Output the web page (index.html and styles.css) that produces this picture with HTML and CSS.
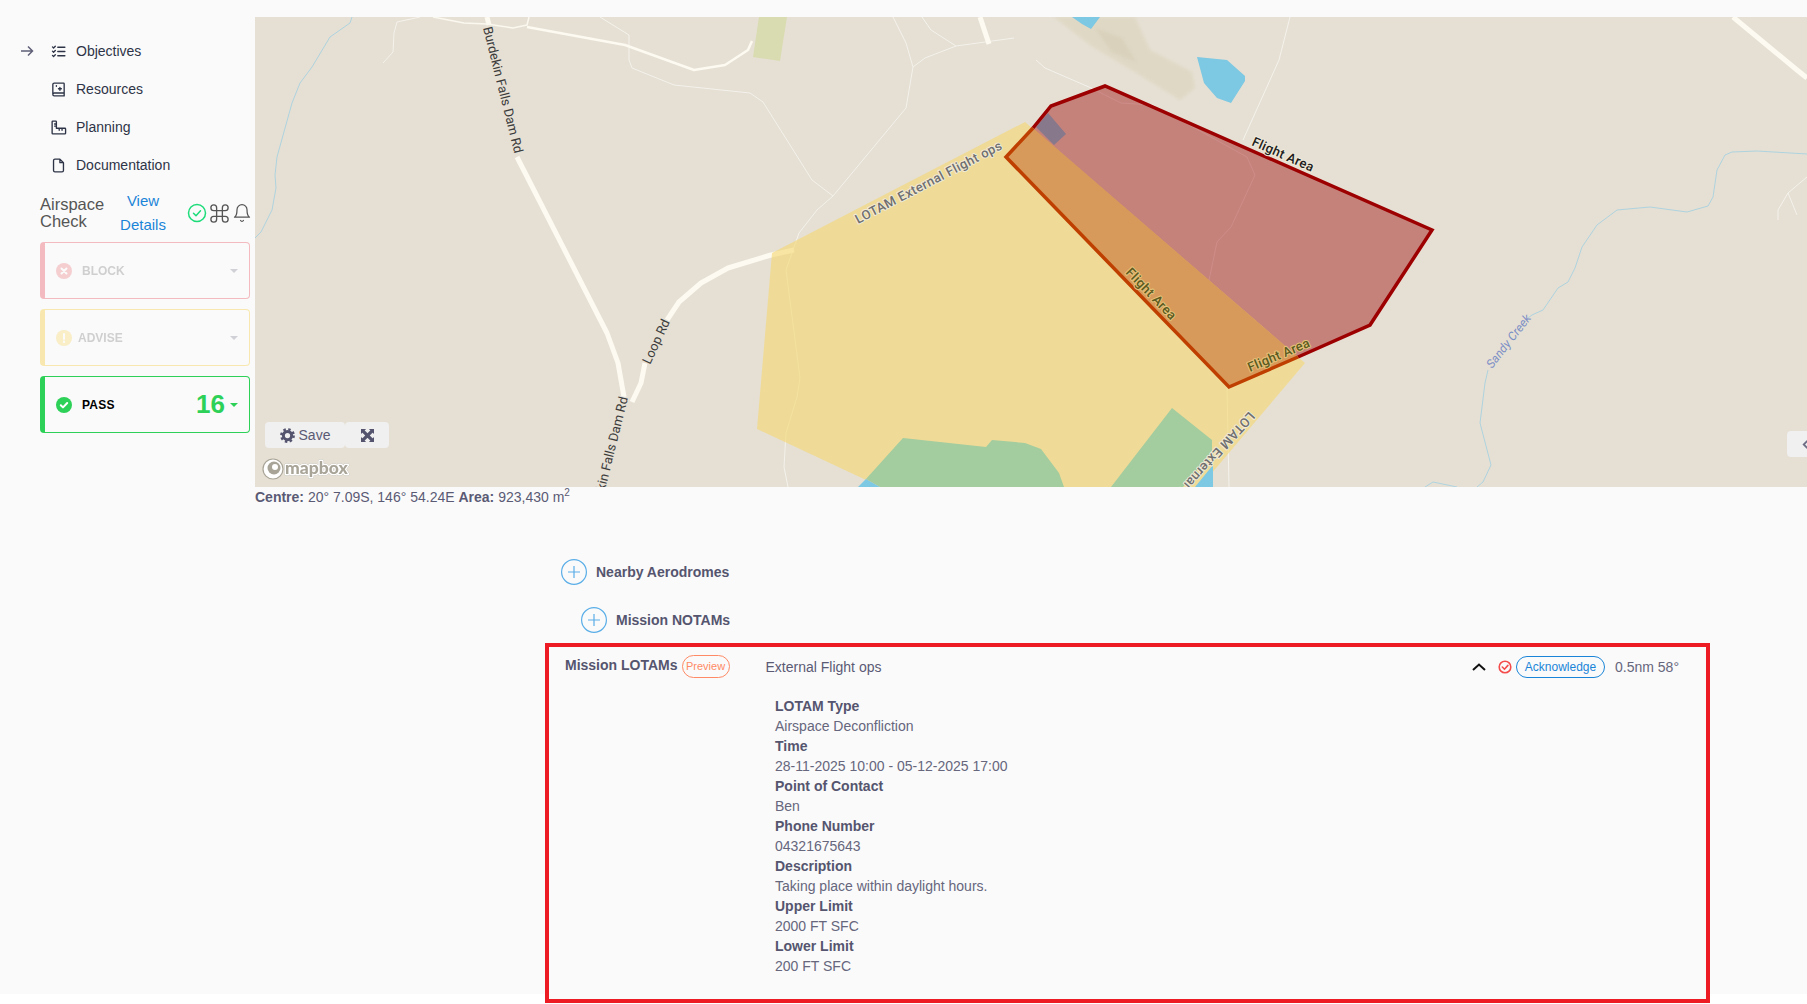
FILE: index.html
```html
<!DOCTYPE html>
<html lang="en">
<head>
<meta charset="utf-8">
<title>Airspace Check</title>
<link rel="stylesheet" href="styles.css">
</head>
<body>
<div class="page">
  <div class="top">
    <aside class="sidebar">
      <nav class="nav">
        <a class="nav-item">
          <span class="nav-arrow"><svg class="i-arrow" viewBox="0 0 14 12"><path d="M1 6h11.5M8 1.5 12.5 6 8 10.5"/></svg></span>
          <svg class="nav-icon" viewBox="0 0 24 24"><path d="M3.5 5.5 5 7l2.5-2.5M3.5 11.5 5 13l2.5-2.5M3.5 17.5 5 19l2.5-2.5M11 6h10M11 12h10M11 18h10"/></svg>
          <span>Objectives</span>
        </a>
        <a class="nav-item">
          <span class="nav-arrow"></span>
          <svg class="nav-icon" viewBox="0 0 24 24"><path d="M4 18V5a2 2 0 0 1 2-2h13a1 1 0 0 1 1 1v13H6a2 2 0 0 0-2 2 2 2 0 0 0 2 2h14v-4M14 9v4M12 11h4M9 6.5v1"/></svg>
          <span>Resources</span>
        </a>
        <a class="nav-item">
          <span class="nav-arrow"></span>
          <svg class="nav-icon" viewBox="0 0 24 24"><path d="M3 4a1 1 0 0 1 1-1h4a1 1 0 0 1 1 1v9h12a1 1 0 0 1 1 1v6a1 1 0 0 1-1 1H4a1 1 0 0 1-1-1zM13 13v3M17 13v3M9 7H6.5M9 10H6.5"/></svg>
          <span>Planning</span>
        </a>
        <a class="nav-item">
          <span class="nav-arrow"></span>
          <svg class="nav-icon" viewBox="0 0 24 24"><path d="M14 3H7a2 2 0 0 0-2 2v14a2 2 0 0 0 2 2h10a2 2 0 0 0 2-2V8zM14 3v5h5"/></svg>
          <span>Documentation</span>
        </a>
      </nav>
      <div class="check-head">
        <div class="check-title">Airspace Check</div>
        <a class="check-link">View Details</a>
        <div class="check-icons">
          <svg class="ci ci-ok" viewBox="0 0 20 20"><circle cx="10" cy="10" r="8.5"/><path d="m6.5 10.2 2.5 2.5 4.5-5"/></svg>
          <svg class="ci ci-drone" viewBox="0 0 24 24"><path d="M15 6v12a3 3 0 1 0 3-3H6a3 3 0 1 0 3 3V6a3 3 0 1 0-3 3h12a3 3 0 1 0-3-3"/></svg>
          <svg class="ci ci-dark" viewBox="0 0 24 24"><path d="M6 8a6 6 0 0 1 12 0c0 7 3 9 3 9H3s3-2 3-9M10.3 21a1.94 1.94 0 0 0 3.4 0"/></svg>
        </div>
      </div>
      <div class="cards">
        <div class="card card-block">
          <svg class="card-icon" viewBox="0 0 16 16"><circle class="disc" cx="8" cy="8" r="8"/><path class="mark" d="m5.5 5.5 5 5m0-5-5 5"/></svg>
          <span class="card-label">BLOCK</span>
          <span class="card-right"><span class="caret"></span></span>
        </div>
        <div class="card card-advise">
          <svg class="card-icon" viewBox="0 0 16 16"><circle class="disc" cx="8" cy="8" r="8"/><path class="mark" d="M8 4v5M8 11.5v.5"/></svg>
          <span class="card-label">ADVISE</span>
          <span class="card-right"><span class="caret"></span></span>
        </div>
        <div class="card card-pass">
          <svg class="card-icon" viewBox="0 0 16 16"><circle class="disc" cx="8" cy="8" r="8"/><path class="mark" d="m4.8 8.2 2.2 2.2 4.2-4.4"/></svg>
          <span class="card-label">PASS</span>
          <span class="card-right"><span class="count">16</span><span class="caret"></span></span>
        </div>
      </div>
    </aside>
    <main class="map-col">
      <div class="map">
        <svg class="map-svg" viewBox="255 17 1552 470" preserveAspectRatio="none">
          <g class="terrain">
            <path d="M1054 17 1090 45 1135 72 1180 100 1195 88 1192 72 1150 50 1135 17z"/>
            <path class="terrain-dark" d="M1095 28 1122 38 1136 62 1112 52z"/>
          </g>
          <path class="field" d="M759 17h28l-7 44-27-4z"/>
          <path class="water" d="M1072 17h28l-9 12-9-5zM1197 57l30 3 18 16v5l-14 22-14-5-13-15z"/>
          <g class="stream">
            <path d="M352 17 350 23 330 37 312 67 300 83 292 103 277 157 275 175 276 188 272 210 261 232 255 238"/>
            <path d="M1807 154 1757 151 1732 152 1725 155 1717 170 1713 197 1708 206 1687 212 1650 207 1617 210 1597 225 1582 247 1575 268 1568 282 1558 288 1543 310 1532 315 1528 318"/>
            <path d="M1488 370 1485 383 1480 423 1491 465 1483 482 1477 487M1425 487 1433 482 1457 487"/>
          </g>
          <g class="track">
            <path d="M420 17 397 22 394 33 393 52 383 63"/>
            <path d="M600 17 629 35 629 60 632 68 674 85 750 93 763 102 812 180 833 196"/>
            <path d="M893 17 906 43 913 67 906 108 833 196 817 210 799 233 786 270 800 378 797 397 786 433 784 467 788 487"/>
            <path d="M913 67 925 58 956 46 1014 38"/>
            <path d="M922 17 931 30 956 46"/>
            <path d="M1036 60 1045 68 1089 87 1121 103 1153 105 1247 157 1255 175 1231 227 1217 242 1207 290 1227 387 1229 487"/>
            <path d="M1290 17 1279 60 1243 140"/>
            <path d="M1807 177 1788 193 1778 210V220M1788 193 1797 215"/>
          </g>
          <g class="road">
            <path d="M487 17 489 25"/>
            <path d="M517 157 607 333 618 363 624 397"/>
            <path d="M632 402 641 383 645 363"/>
            <path d="M667 320 679 302 701 283 728 268 771 255 794 250"/>
            <path d="M980 17 989 44"/>
            <path d="M1733 17 1797 70 1807 78"/>
          </g>
          <path class="road-thin" d="M433 17 464 23 487 24 513 28 527 25 529 17"/>
          <path class="road-mid" d="M527 27 625 45 694 70 725 65 748 50 752 41"/>
          <path class="flight-fill" d="M1105 86 1051 106 1006 157 1229 387 1370 325 1432 230z"/>
          <path class="lotam-fill" d="M1025 122 772 253 757 429 881 487H1200L1305 363z"/>
          <path class="green" d="M903 438 986 447 992 440 1025 443 1041 449 1059 473 1064 487H880L866 479z"/>
          <path class="green" d="M1172 408 1212 440V452L1183 487H1111z"/>
          <path class="water" d="M858 487 866 479 880 487zM1213 487V465L1195 487z"/>
          <path class="overlap" d="M1033 128 1298 357 1229 387 1006 157z"/>
          <path class="hidden-quad" d="M1048 113 1066 134 1054 145 1036 127z"/>
          <path class="flight-line" d="M1033 128 1051 106 1105 86 1432 230 1370 325 1298 357"/>
          <path class="flight-line-over" d="M1033 128 1006 157 1229 387 1298 357"/>

          <text class="lbl lbl-road" transform="translate(483 28) rotate(76)">Burdekin Falls Dam Rd</text>
          <text class="lbl lbl-road lbl-end" transform="translate(628 398) rotate(-76)">Burdekin Falls Dam Rd</text>
          <text class="lbl lbl-road" transform="translate(650 365) rotate(-65)">Loop Rd</text>
          <text class="lbl lbl-lotam" transform="translate(858 224) rotate(-27.5)">LOTAM External Flight ops</text>
          <text class="lbl lbl-lotam" transform="translate(1249 411) rotate(132)">LOTAM External Flight ops</text>
          <text class="lbl lbl-flight" transform="translate(1251 145) rotate(24)">Flight Area</text>
          <text class="lbl lbl-flight-o" transform="translate(1125 273) rotate(46)">Flight Area</text>
          <text class="lbl lbl-flight-o" transform="translate(1250 372) rotate(-23)">Flight Area</text>
          <text class="lbl lbl-creek" transform="translate(1492 369) rotate(-52)">Sandy Creek</text>

          <circle class="logo-ring" cx="273" cy="469" r="10"/>
          <circle class="logo-core" cx="274" cy="468" r="6.5"/>
          <circle class="logo-dot" cx="275" cy="467" r="3"/>
          <text class="logo-text" x="285" y="474">mapbox</text>
        </svg>
        <div class="map-tools">
          <button class="map-btn map-save">
            <svg class="gear" viewBox="0 0 16 16"><circle class="gear-ring" cx="8" cy="8" r="4.4"/><circle class="gear-teeth" cx="8" cy="8" r="6.6"/></svg>
            Save
          </button>
          <button class="map-btn map-expand">
            <svg class="expand" viewBox="0 0 14 14"><path d="M0 0h5.5L0 5.5zM14 0v5.5L8.5 0zM0 14V8.5L5.5 14zM14 14H8.5L14 8.5z"/><path class="expand-x" d="m2 2 10 10M12 2 2 12"/></svg>
          </button>
        </div>
        <div class="map-edge"><svg class="edge-chev" viewBox="0 0 10 12"><path d="M7 2 3 6l4 4"/></svg></div>
      </div>
      <p class="caption"><b>Centre:</b> 20° 7.09S, 146° 54.24E <b>Area:</b> 923,430 m<sup>2</sup></p>
    </main>
  </div>

  <section class="sections">
    <div class="acc acc-nearby">
      <svg class="plus" viewBox="0 0 26 26"><circle cx="13" cy="13" r="12.4"/><path d="M13 7v12M7 13h12"/></svg>
      <span class="acc-label">Nearby Aerodromes</span>
    </div>
    <div class="acc acc-notam">
      <svg class="plus" viewBox="0 0 26 26"><circle cx="13" cy="13" r="12.4"/><path d="M13 7v12M7 13h12"/></svg>
      <span class="acc-label">Mission NOTAMs</span>
    </div>
    <div class="lotam">
      <div class="lotam-head">
        <span class="acc-label lotam-title">Mission LOTAMs</span>
        <span class="preview">Preview</span>
        <span class="lotam-name">External Flight ops</span>
        <svg class="chev" viewBox="0 0 14 8"><path d="m1 7 6-5.5L13 7"/></svg>
        <svg class="red-check" viewBox="0 0 14 14"><circle cx="7" cy="7" r="5.8"/><path d="m4.3 7 2.2 2.2 3.4-3.8"/></svg>
        <span class="ack">Acknowledge</span>
        <span class="dist">0.5nm 58°</span>
      </div>
      <dl class="details">
        <dt>LOTAM Type</dt><dd>Airspace Deconfliction</dd>
        <dt>Time</dt><dd>28-11-2025 10:00 - 05-12-2025 17:00</dd>
        <dt>Point of Contact</dt><dd>Ben</dd>
        <dt>Phone Number</dt><dd>04321675643</dd>
        <dt>Description</dt><dd>Taking place within daylight hours.</dd>
        <dt>Upper Limit</dt><dd>2000 FT SFC</dd>
        <dt>Lower Limit</dt><dd>200 FT SFC</dd>
      </dl>
    </div>
  </section>
</div>
</body>
</html>
```

FILE: styles.css
```css
* { box-sizing: border-box; }
html, body { margin: 0; padding: 0; background: #fff; overflow: hidden; height: 1004px; }
body { font-family: "Liberation Sans", Arial, sans-serif; font-size: 14px; color: #5a5a75; }
.page { height: 994px; background: #fafafa; padding-top: 17px; }
.top { display: flex; align-items: flex-start; }

/* sidebar */
.sidebar { width: 255px; flex: none; }
.nav { padding-top: 15px; }
.nav-item { display: flex; align-items: center; height: 38px; padding-left: 20px; color: #2e3447; }
.nav-arrow { width: 30px; flex: none; display: flex; }
.i-arrow { width: 14px; height: 12px; fill: none; stroke: #5f5f78; stroke-width: 1.5; }
.nav-icon { width: 17px; height: 17px; flex: none; margin-right: 9px; fill: none; stroke: #2e3447; stroke-width: 1.9; stroke-linecap: round; stroke-linejoin: round; }

.check-head { display: flex; align-items: center; height: 48px; margin-top: 5px; padding-left: 40px; }
.check-title { width: 80px; font-size: 16.5px; line-height: 17px; color: #555; }
.check-link { width: 46px; text-align: center; font-size: 15px; line-height: 24px; color: #1a85d8; }
.check-icons { display: flex; align-items: center; margin-left: 21px; }
.ci { width: 20px; height: 20px; flex: none; fill: none; stroke-linecap: round; stroke-linejoin: round; }
.ci-ok { stroke: #1edc7a; stroke-width: 1.5; }
.ci-dark { margin-left: 1px; stroke: #555; stroke-width: 1.5; }
.ci-drone { width: 23px; height: 23px; margin-left: 1px; stroke: #555; stroke-width: 1.4; }

.cards { display: flex; flex-direction: column; gap: 10px; margin: 5px 0 0 40px; width: 210px; }
.card { display: flex; align-items: center; height: 57px; padding: 0 11px; background: #fafafa; border: 1px solid; border-left-width: 5px; border-radius: 4px; }
.card-icon { width: 16px; height: 16px; margin-right: 10px; flex: none; }
.card-label { font-size: 12px; font-weight: 700; color: #777; }
.card-right { margin-left: auto; display: flex; align-items: center; gap: 5px; }
.caret { width: 0; height: 0; border-left: 4px solid transparent; border-right: 4px solid transparent; border-top: 4px solid #7a7a90; }
.disc { fill: currentColor; }
.mark { fill: none; stroke: #fff; stroke-width: 2; stroke-linecap: round; stroke-linejoin: round; }
.card-block { border-color: #e53945; color: #e53945; opacity: .32; }
.card-advise { border-color: #f5c518; color: #f5c518; opacity: .32; }
.card-block .disc, .card-advise .disc { opacity: .7; }
.card-advise .card-icon { margin-right: 6px; }
.card-pass { border-color: #2ed158; color: #2ed158; }
.card-pass .card-label { color: #000; letter-spacing: .2px; }
.card-pass .caret { border-top-color: #2ed158; }
.count { font-size: 26px; font-weight: 700; color: #2ed158; line-height: 1; position: relative; top: -1px; }

/* map */
.map-col { flex: 1; min-width: 0; }
.map { position: relative; height: 470px; background: #e6e0d4; overflow: hidden; }
.map-svg { display: block; width: 100%; height: 100%; }
.terrain path { fill: #dfd8c5; filter: blur(1.5px); }
.terrain .terrain-dark { fill: #d9d1bb; }
.field { fill: #d9dbb0; }
.water { fill: #7dc8e2; }
.stream path { fill: none; stroke: #aed3df; stroke-width: 1; }
.track path { fill: none; stroke: #f4f2ec; stroke-width: 1; }
.road path { fill: none; stroke: #fdfaf2; stroke-width: 5; stroke-linejoin: round; }
.road-mid { fill: none; stroke: #fdfaf2; stroke-width: 2.5; stroke-linejoin: round; }
.road-thin { fill: none; stroke: #fbf8f0; stroke-width: 1.5; stroke-linejoin: round; }
.flight-fill { fill: rgba(152, 0, 0, .42); }
.hidden-quad { fill: #87788b; }
.lotam-fill { fill: rgba(245, 215, 110, .6); }
.green { fill: #a3cc9f; }
.overlap { fill: #d89a5a; }
.flight-line { fill: none; stroke: #9d0000; stroke-width: 3.5; stroke-linejoin: miter; }
.flight-line-over { fill: none; stroke: #bf3f00; stroke-width: 3.5; stroke-linejoin: miter; }

.lbl { font-family: Roboto, "Liberation Sans", sans-serif; font-size: 13px; paint-order: stroke; stroke-linejoin: round; }
.lbl-end { text-anchor: end; }
.lbl-road { fill: #3b3b3b; stroke: #e6e0d4; stroke-width: 2; }
.lbl-lotam { font-weight: 500; letter-spacing: .4px; fill: #6f6f6f; stroke: #f0ead8; stroke-width: 2; }
.lbl-flight { font-weight: 500; letter-spacing: .3px; fill: #1d1d1d; stroke: #f0ead8; stroke-width: 2; }
.lbl-flight-o { font-weight: 500; letter-spacing: .3px; fill: #5b5a20; stroke: #e6c27a; stroke-width: 2; }
.lbl-creek { font-size: 12px; font-style: italic; fill: #7b8ec6; stroke: #e6e0d4; stroke-width: 1; }

.logo-ring { fill: #fff; stroke: #a9a498; stroke-width: 1.2; }
.logo-core { fill: #a9a498; }
.logo-dot { fill: #fff; }
.logo-text { font-family: Lato, "Liberation Sans", sans-serif; font-size: 17.5px; font-weight: 900; fill: #a9a498; stroke: #fff; stroke-width: 3; paint-order: stroke; stroke-linejoin: round; filter: drop-shadow(0 0 .6px #8a8578); }

.map-tools { position: absolute; left: 10px; bottom: 39px; display: flex; }
.map-btn { display: flex; align-items: center; justify-content: center; height: 26px; border: 0; border-radius: 4px; padding: 0; background: #f0f0f0; color: #5a5a75; font: 14px "Liberation Sans", Arial, sans-serif; }
.map-save { width: 80px; gap: 4px; }
.map-expand { width: 44px; }
.gear { width: 15px; height: 15px; }
.gear-ring { fill: none; stroke: #54546f; stroke-width: 3.2; }
.gear-teeth { fill: none; stroke: #54546f; stroke-width: 2.6; stroke-dasharray: 2.6 2.58; }
.expand { width: 13px; height: 13px; fill: #54546f; }
.expand-x { stroke: #54546f; stroke-width: 3.5; fill: none; }
.map-edge { position: absolute; right: -6px; bottom: 30px; width: 26px; height: 26px; border-radius: 4px; background: #f0f0f0; display: flex; align-items: center; padding-left: 14px; }
.edge-chev { width: 9px; height: 11px; fill: none; stroke: #6d6d85; stroke-width: 2; }

.caption { margin: 0; height: 20px; line-height: 20px; color: #5a5a75; }
.caption b { font-weight: 700; }
.caption sup { font-size: 10px; line-height: 0; }

/* sections */
.sections { padding-top: 52px; }
.acc { display: flex; align-items: center; height: 26px; gap: 9px; }
.acc-nearby { margin-left: 561px; }
.acc-notam { margin: 22px 0 0 581px; }
.plus { width: 26px; height: 26px; fill: none; stroke: #5aaee8; stroke-width: 1.2; }
.acc-label { font-weight: 700; color: #55556f; }

.lotam { width: 1165px; height: 360px; margin: 10px 0 0 545px; border: 4px solid #ed1c24; background: #fafafa; }
.lotam-head { display: flex; align-items: center; height: 40px; padding: 0 27px 0 16px; }
.lotam-title { position: relative; top: -2px; }
.preview { margin-left: 4px; width: 48px; height: 23px; line-height: 21px; text-align: center; font-size: 11px; color: #ff8a65; border: 1px solid #ff8a65; border-radius: 12px; position: relative; top: -1px; }
.lotam-name { margin-left: 36px; }
.chev { margin-left: auto; width: 14px; height: 8px; fill: none; stroke: #111; stroke-width: 2; }
.red-check { margin-left: 12px; width: 14px; height: 14px; fill: none; stroke: #f44b4b; stroke-width: 1.6; stroke-linecap: round; }
.ack { margin-left: 4px; width: 89px; height: 22px; line-height: 20px; text-align: center; font-size: 12px; color: #1a85d8; border: 1px solid #1a85d8; border-radius: 11px; }
.dist { margin-left: 10px; color: #66667d; }

.details { margin: 9px 0 0; padding-left: 226px; }
.details dt { font-weight: 700; line-height: 20px; color: #55556f; }
.details dd { margin: 0; line-height: 20px; color: #66667d; }
```
